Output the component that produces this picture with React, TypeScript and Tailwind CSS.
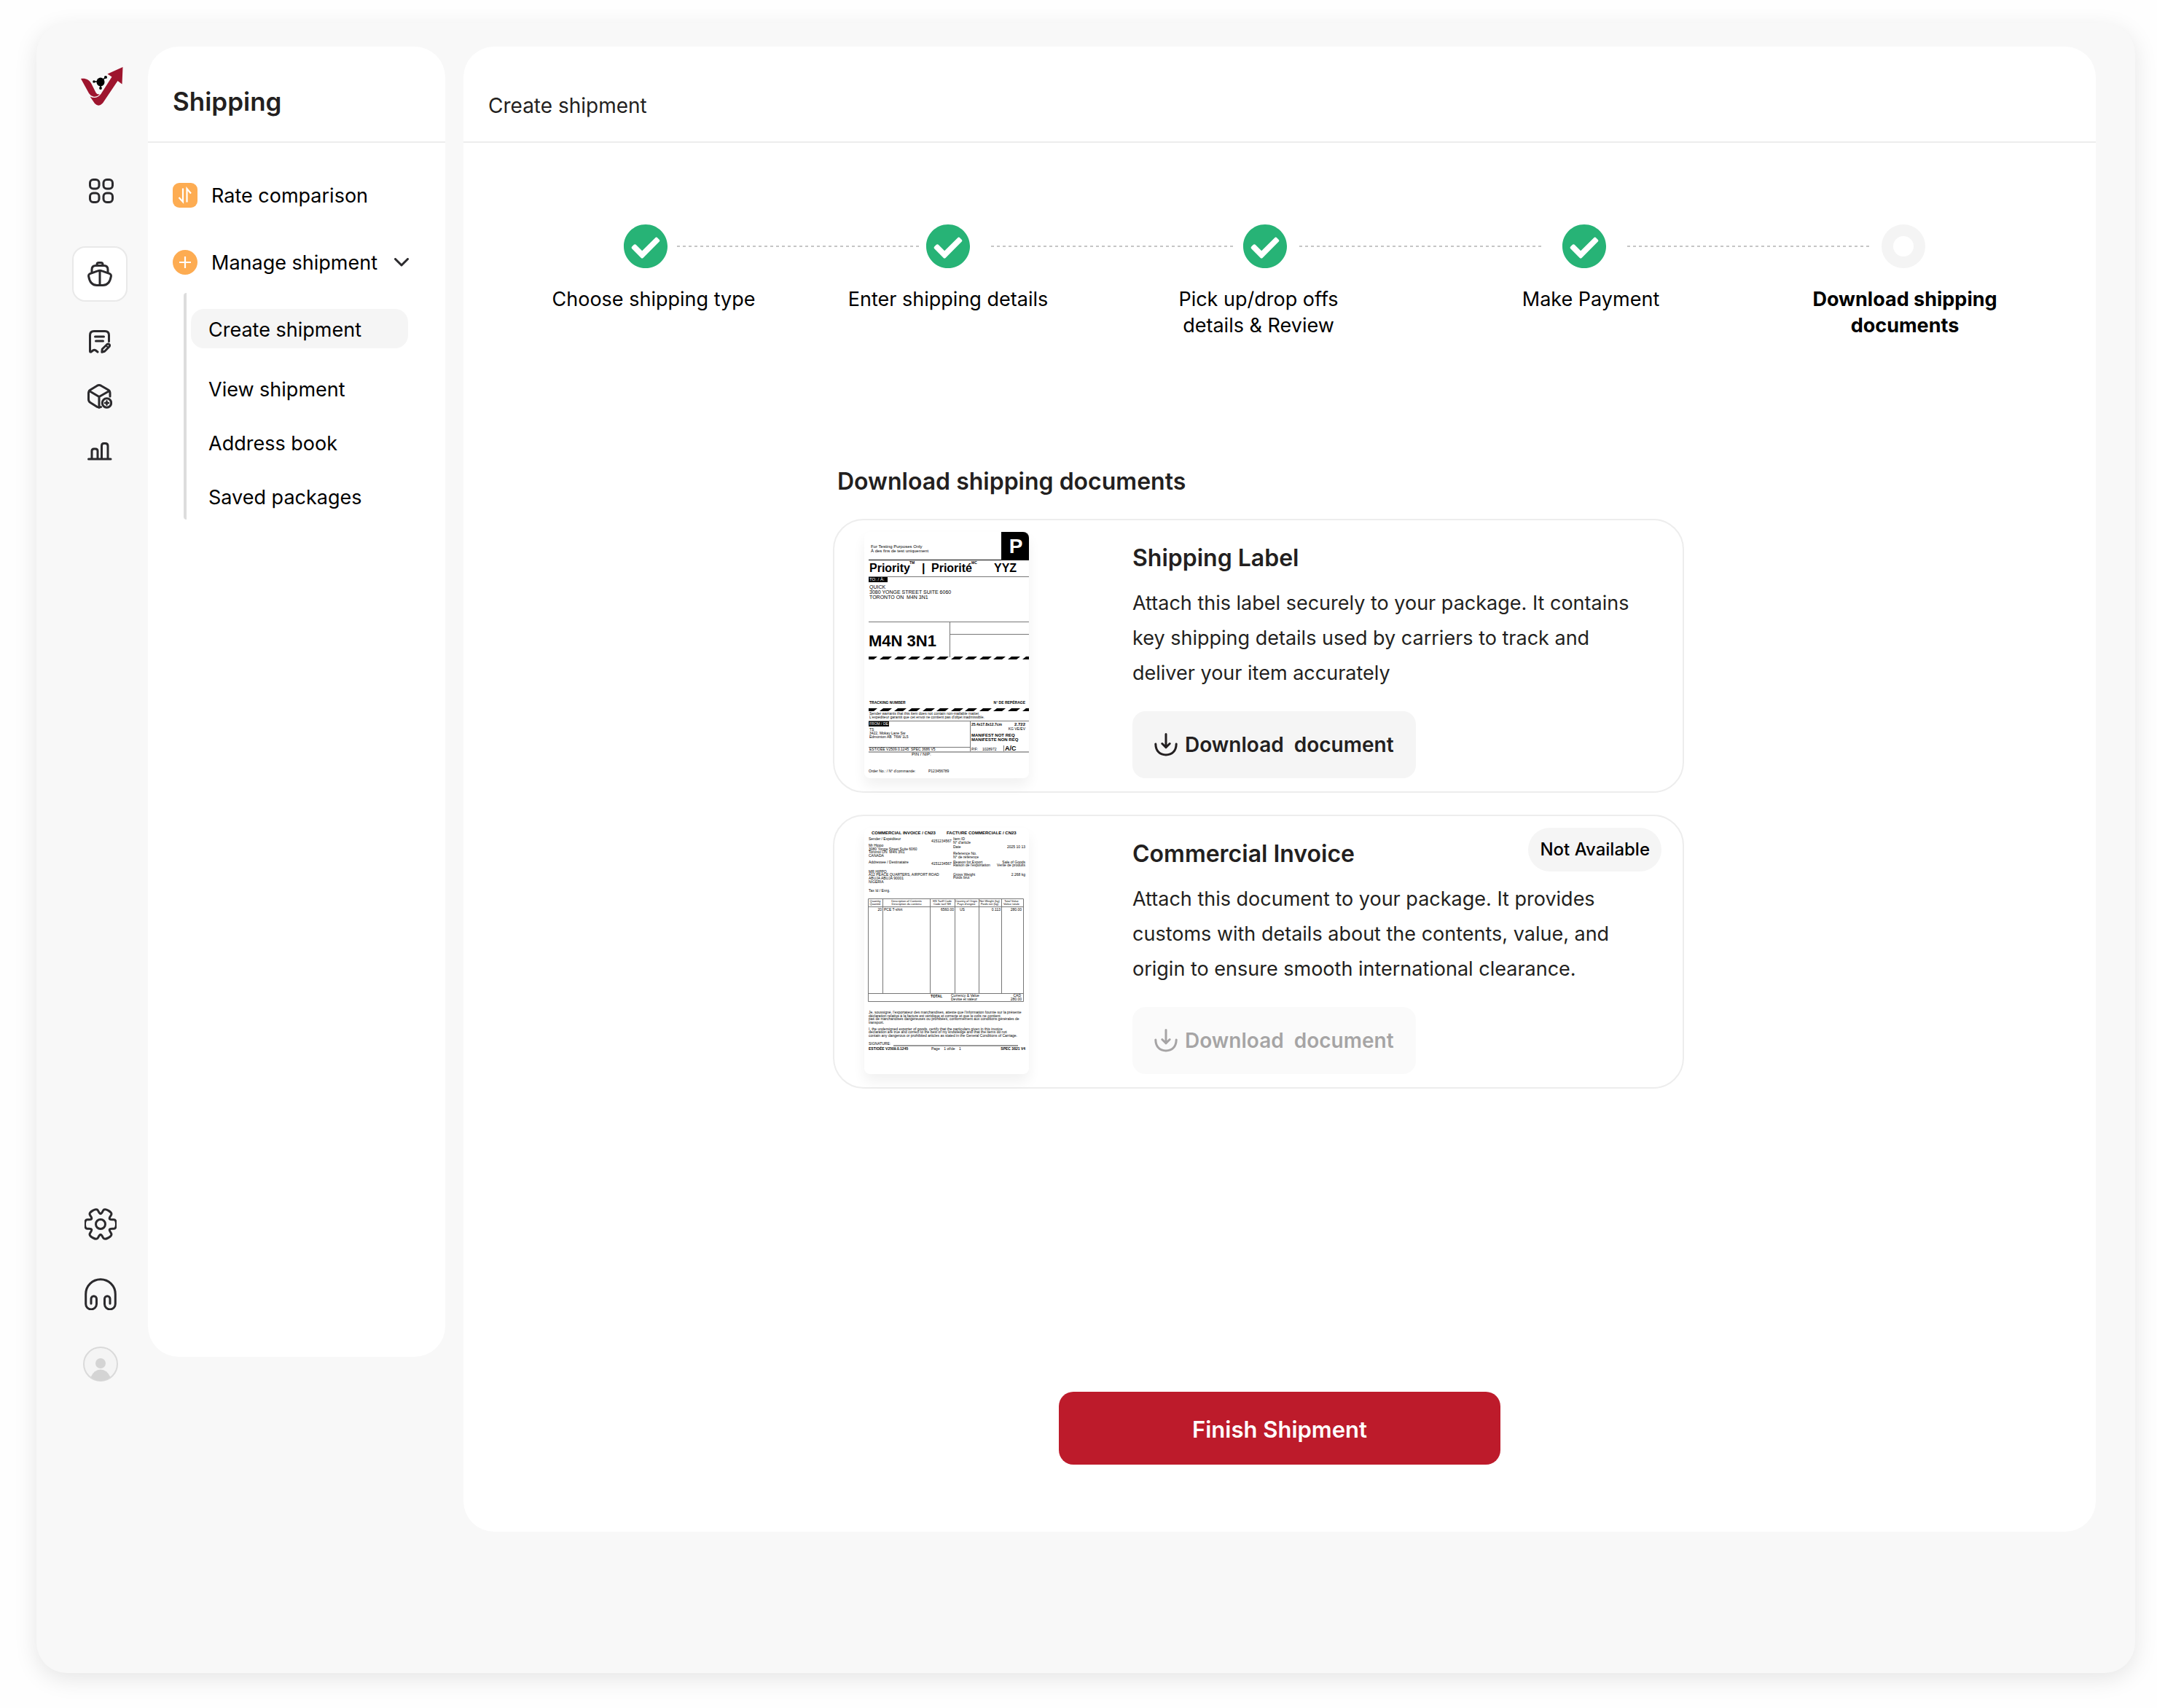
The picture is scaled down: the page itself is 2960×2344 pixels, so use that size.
import { Fragment, ReactNode } from "react";
import clsx from "clsx";
import { FaCheckCircle } from "react-icons/fa";

const steps = [
  { label: "Choose shipping type", done: true, line: "ml-3 mr-2" },
  { label: "Enter shipping details", done: true, line: "ml-7 mr-3" },
  { label: "Pick up/drop offs details & Review", done: true, line: "ml-4 mr-7" },
  { label: "Make Payment", done: true, line: "ml-7 mr-4" },
  { label: "Download shipping documents", done: false, line: "" },
];

const subLinks = ["Create shipment", "View shipment", "Address book", "Saved packages"];

const Logo = () => (
  <svg className="h-[53px] w-[58px]" viewBox="0 0 58 53">
    <path
      d="M0 16C6 15 11.500 17 14.500 23L20.500 35Q22 38 26 37.500Q22 41.500 17 40.500Q13 39.500 11 36Z"
      fill="#9e152e"
    />
    <path
      d="M57.500 0L56.500 23.500L50.500 19L30 49.500Q24.500 55.500 19 50L12.500 40.500Q21.500 45 27.500 37L42.500 13.500L36.500 9.500Z"
      fill="#9e152e"
    />
    <path d="M17.500 20H27L34 14M27 20V29" stroke="#000" strokeWidth="1.500" fill="none" />
    <ellipse cx="27" cy="20.500" rx="5.500" ry="6" />
    <circle cx="18" cy="20" r="1.800" />
    <circle cx="34" cy="14" r="2" />
    <circle cx="27" cy="29" r="1.900" />
  </svg>
);

const Icon = ({
  w,
  h,
  className,
  strokeWidth = 3,
  children,
}: {
  w: number;
  h: number;
  className: string;
  strokeWidth?: number;
  children: ReactNode;
}) => (
  <svg
    className={className}
    viewBox={`0 0 ${w} ${h}`}
    fill="none"
    stroke="currentColor"
    strokeWidth={strokeWidth}
    strokeLinecap="round"
    strokeLinejoin="round"
    aria-hidden="true"
  >
    {children}
  </svg>
);

const GridIcon = () => (
  <Icon w={34} h={34} className="h-[34px] w-[34px]">
    <rect x="1.500" y="1.500" width="12.500" height="12.500" rx="4.500" />
    <rect x="20" y="1.500" width="12.500" height="12.500" rx="4.500" />
    <rect x="1.500" y="20" width="12.500" height="12.500" rx="4.500" />
    <rect x="20" y="20" width="12.500" height="12.500" rx="4.500" />
  </Icon>
);

const ShipIcon = () => (
  <Icon w={34} h={34} className="h-[34px] w-[34px]">
    <path d="M13 5.500V4Q13 1.500 15.500 1.500H18.500Q21 1.500 21 4V5.500" />
    <path d="M6 15V11Q6 5.500 11.500 5.500H22.500Q28 5.500 28 11V15" />
    <path d="M17 12.300Q18.500 12.300 20 12.900L30.500 16.600Q32.800 17.600 32.400 20C31 29 27 32.500 21 32.500H13C7 32.500 3 29 1.600 20Q1.200 17.600 3.500 16.600L14 12.900Q15.500 12.300 17 12.300ZM17 12.500V32" />
  </Icon>
);

const InvoiceIcon = () => (
  <Icon w={30} h={32} className="h-8 w-[30px]">
    <path d="M27.500 15.500V7Q27.500 1.500 22 1.500H7Q1.500 1.500 1.500 7V29Q1.500 30.700 3.200 29.800L5.500 28Q7.500 26.500 9.500 28L12 30" />
    <path d="M8.500 9H20.500M9.500 15H19.500" />
    <path d="M17.800 30.200L18.300 26L25 19.500Q26.700 18.300 28 19.700Q29.200 21.200 27.900 22.700L21.500 29.300Z" />
    <path d="M23.800 21.500L26 23.600" strokeWidth="2" />
  </Icon>
);

const PackageIcon = () => (
  <Icon w={34} h={34} className="h-[34px] w-[34px]">
    <path d="M31 17V12.500Q31 9.500 28.500 8L18.500 2.200Q16 1 13.500 2.200L4 8Q1.500 9.500 1.500 12.500V21Q1.500 24 4 25.500L13.500 31.500Q16 32.800 18.500 31.500" />
    <path d="M2.500 9.500L16 17.500L30 9.500M16 17.500V32" />
    <circle cx="26.500" cy="26" r="6.200" />
    <path d="M26.500 23.400V28.600M23.900 26H29.100" strokeWidth="2.500" />
  </Icon>
);

const ChartIcon = () => (
  <Icon w={34} h={25} className="h-[25px] w-[34px]">
    <path d="M1.500 23H32M6 23V12Q6 9 9 9H11Q14 9 14 12V23M19.500 23V5Q19.500 1.500 22.500 1.500H24.500Q28 1.500 28 5V23" />
  </Icon>
);

// six-lobed cog, smoothed through the midpoints of a polar outline
const gearPath = () => {
  const pts: number[][] = [];
  for (let k = 0; k < 6; k++) {
    [
      [15.5, -23],
      [22.5, -17],
      [22.5, 17],
      [15.5, 23],
      [14, 30],
    ].forEach(([r, d]) => {
      const a = ((k * 60 + d) * Math.PI) / 180;
      pts.push([22 + r * Math.cos(a), 22 + r * Math.sin(a)]);
    });
  }
  const mid = (a: number[], b: number[]) => `${(a[0] + b[0]) / 2} ${(a[1] + b[1]) / 2}`;
  let d = `M${mid(pts[pts.length - 1], pts[0])}`;
  pts.forEach((p, i) => {
    d += `Q${p[0]} ${p[1]} ${mid(p, pts[(i + 1) % pts.length])}`;
  });
  return d + "Z";
};

const GearIcon = () => (
  <Icon w={44} h={44} className="h-11 w-11">
    <path d={gearPath()} />
    <circle cx="22" cy="22" r="6.500" />
  </Icon>
);

const HeadphonesIcon = () => (
  <Icon w={44} h={44} className="h-11 w-11">
    <path d="M9 35V28.500A3.700 3.700 0 0 1 16.500 28.500V35.500A7.400 7.400 0 0 1 1.700 35.500V22A20.300 20.300 0 0 1 42.300 22V35.500A7.400 7.400 0 0 1 27.500 35.500V28.500A3.700 3.700 0 0 1 35 28.500V35" />
  </Icon>
);

const AvatarIcon = () => (
  <svg className="h-12 w-12" viewBox="0 0 48 48" aria-hidden="true">
    <circle cx="24" cy="24" r="23" fill="#f4f4f4" stroke="#dadada" strokeWidth="2" />
    <circle cx="24" cy="23" r="7" fill="#d4d4d4" />
    <path d="M10.500 42Q15 31.500 24 31.500T37.500 42Q31.500 47 24 47T10.500 42Z" fill="#d4d4d4" />
  </svg>
);

const DownloadIcon = () => (
  <Icon w={32} h={32} className="h-8 w-8">
    <path d="M16 1.500V19M10.800 14.500L16 19.800L21.200 14.500" />
    <path d="M1.800 15C2 24.500 7.500 30 16 30S30 24.500 30.200 15" />
  </Icon>
);

const Rail = () => (
  <nav
    aria-label="Main"
    className="flex min-h-[calc(100vh-512px)] w-20 shrink-0 flex-col items-center self-start pt-7 text-[#2b2a2d]"
  >
    <a href="#home" aria-label="Home" className="pl-1">
      <Logo />
    </a>
    <a href="#dashboard" aria-label="Dashboard" className="mt-[97px] flex h-10 items-center pl-0.5">
      <GridIcon />
    </a>
    <div className="mt-14 flex flex-col items-center gap-[35px] pr-0.5">
      <a
        href="#shipping"
        aria-label="Shipping"
        className="flex h-[76px] w-[76px] items-center justify-center rounded-[18px] border-2 border-[#e9e9e9] bg-white"
      >
        <ShipIcon />
      </a>
      <a href="#invoices" aria-label="Invoices" className="flex h-10 items-center">
        <InvoiceIcon />
      </a>
      <a href="#packages" aria-label="Packages" className="flex h-10 items-center">
        <PackageIcon />
      </a>
      <a href="#reports" aria-label="Reports" className="flex h-10 items-center">
        <ChartIcon />
      </a>
    </div>
    <div className="mt-auto flex flex-col items-center gap-12">
      <a href="#settings" aria-label="Settings" className="flex h-12 items-center">
        <GearIcon />
      </a>
      <a href="#support" aria-label="Support" className="flex h-12 items-center">
        <HeadphonesIcon />
      </a>
      <a href="#profile" aria-label="Profile">
        <AvatarIcon />
      </a>
    </div>
  </nav>
);

const Sidebar = () => (
  <aside className="ml-[25px] min-h-[calc(100vh-546px)] w-[408px] shrink-0 self-start rounded-[42px] bg-white text-[27px] text-black">
    <div className="flex h-[132px] items-center border-b-2 border-[#ededed] px-[34px] pt-5">
      <h2 className="text-[35px] leading-[48px] font-semibold text-[#231f20]">Shipping</h2>
    </div>
    <div className="flex flex-col gap-11 px-[34px] pt-12">
      <a href="#rates" className="flex h-12 items-center gap-[19px]">
        <svg className="h-[34px] w-[34px]" viewBox="0 0 34 34" aria-hidden="true">
          <rect width="34" height="34" rx="9" fill="#fdac52" />
          <path
            d="M14 7.500V26L8.500 20M19.500 26.500V8L25 14.500"
            fill="none"
            stroke="#fff"
            strokeWidth="2.200"
          />
        </svg>
        <span className="pt-0.5">Rate comparison</span>
      </a>
      <button type="button" className="flex h-12 items-center gap-[19px]">
        <svg className="h-[34px] w-[34px]" viewBox="0 0 34 34" aria-hidden="true">
          <circle cx="17" cy="17" r="17" fill="#fdac52" />
          <path d="M17 9V25M9 17H25" stroke="#fff" strokeWidth="2.200" />
        </svg>
        <span className="pt-0.5">Manage shipment</span>
        <Icon w={20} h={12} className="ml-1 h-3 w-5 text-[#2b2a2d]">
          <path d="M1.500 1.500L10 10L18.500 1.500" />
        </Icon>
      </button>
    </div>
    <ul className="mt-[18px] mr-[51px] ml-[49px] flex flex-col gap-9 rounded-sm border-l-4 border-[#dddddd] pt-[22px] pb-[13px] pl-[6px]">
      {subLinks.map((e, index) => (
        <li key={e}>
          <a
            href="#shipment"
            className={clsx(
              "flex items-center pt-1 pl-6",
              index === 0 ? "h-[54px] rounded-[18px] bg-[#f5f5f5]" : "h-[38px]"
            )}
          >
            {e}
          </a>
        </li>
      ))}
    </ul>
  </aside>
);

const Stepper = () => (
  <div className="pt-[111px]">
    <div className="flex items-center pr-[234px] pl-[219px]" aria-hidden="true">
      {steps.map((step) =>
        step.done ? (
          <Fragment key={step.label}>
            <FaCheckCircle className="h-[62px] w-[62px] shrink-0 text-[#27b376]" />
            <svg className={clsx("h-[2px] w-0 flex-1", step.line)}>
              <line x1="0" y1="1" x2="100%" y2="1" stroke="#c6c6c6" strokeWidth="2" strokeDasharray="4 4" />
            </svg>
          </Fragment>
        ) : (
          <span
            key={step.label}
            className="h-[60px] w-[60px] shrink-0 rounded-full border-[16px] border-[#f4f4f4] bg-white"
          />
        )
      )}
    </div>
    <ol className="mt-6 grid grid-cols-[404fr_404fr_448fr_464fr_398fr] pr-[63px] pl-[59px] text-center text-[27px] leading-9 text-black">
      {steps.map((step) => (
        <li key={step.label} className="flex justify-center">
          <span className={clsx(step.done ? "max-w-[300px]" : "max-w-[280px] font-bold")}>{step.label}</span>
        </li>
      ))}
    </ol>
  </div>
);

type DocText = {
  x: number;
  y: number;
  t: string;
  s?: number;
  b?: boolean;
  end?: boolean;
  mid?: boolean;
  c?: string;
};

const DocTexts = ({ items }: { items: DocText[] }) => (
  <>
    {items.map((e, index) => (
      <text
        key={index}
        x={e.x}
        y={e.y}
        fontSize={e.s ?? 5}
        fontWeight={e.b ? 700 : 400}
        textAnchor={e.end ? "end" : e.mid ? "middle" : "start"}
        fill={e.c ?? "#000"}
        xmlSpace="preserve"
      >
        {e.t}
      </text>
    ))}
  </>
);

const Hatch = ({ y }: { y: number }) => (
  <>
    <path d={`M6 ${y}H18L13 ${y + 4}H6Z`} />
    {[21, 41, 60, 80, 99, 119, 138, 158, 177, 197].map((x) => (
      <path key={x} d={`M${x + 5} ${y}H${x + 17}L${x + 12} ${y + 4}H${x}Z`} />
    ))}
    <path d={`M222 ${y}H226V${y + 4}H217Z`} />
  </>
);

const labelTexts: DocText[] = [
  { x: 208, y: 29, t: "P", s: 28, b: true, mid: true, c: "#fff" },
  { x: 9, y: 22, t: "For Testing Purposes Only", s: 6 },
  { x: 9, y: 28, t: "À des fins de test uniquement", s: 6 },
  { x: 7, y: 55, t: "Priority", s: 16, b: true },
  { x: 62, y: 44, t: "TM", s: 5, b: true },
  { x: 79, y: 55, t: "|", s: 16, b: true },
  { x: 92, y: 55, t: "Priorité", s: 16, b: true },
  { x: 147, y: 44, t: "MC", s: 5, b: true },
  { x: 178, y: 55, t: "YYZ", s: 16, b: true },
  { x: 7, y: 67, t: "TO: / À:", s: 6, c: "#fff" },
  { x: 7, y: 78, t: "QUICK", s: 7 },
  { x: 7, y: 85, t: "3080 YONGE STREET SUITE 6060", s: 7 },
  { x: 7, y: 92, t: "TORONTO ON  M4N 3N1", s: 7 },
  { x: 6, y: 157, t: "M4N 3N1", s: 22, b: true },
  { x: 7, y: 236, t: "TRACKING NUMBER", b: true },
  { x: 221, y: 236, t: "N° DE REPÉRAGE", end: true, b: true },
  { x: 7, y: 251, t: "Sender warrants that this item does not contain non-mailable matter." },
  { x: 7, y: 256, t: "L'expéditeur garantit que cet envoi ne contient pas d'objet inadmissible." },
  { x: 7, y: 265, t: "FROM / DE:", c: "#fff" },
  { x: 7, y: 273, t: "TS" },
  { x: 7, y: 278, t: "3422, Mokay Lane Sw" },
  { x: 7, y: 283, t: "Edmonton AB  T6W 1L5" },
  { x: 147, y: 266, t: "25.4x17.8x12.7cm", b: true },
  { x: 221, y: 266, t: "2.722", s: 6, b: true, end: true },
  { x: 221, y: 272, t: "KG VE/EV", end: true },
  { x: 147, y: 281, t: "MANIFEST NOT REQ", s: 6, b: true },
  { x: 147, y: 287, t: "MANIFESTE NON REQ", s: 6, b: true },
  { x: 147, y: 300, t: "P/F:" },
  { x: 162, y: 300, t: "1028972" },
  { x: 193, y: 300, t: "A/C", s: 9, b: true },
  { x: 7, y: 300, t: "EST/OÉE V2509.0.1245  SPEC 3686 V5" },
  { x: 65, y: 307, t: "PIN / NIP:", s: 6 },
  { x: 6, y: 330, t: "Order No.: / N° d'commande:" },
  { x: 88, y: 330, t: "P123456789" },
];

const ShippingLabelPreview = () => (
  <svg
    className="h-[338px] w-[226px] shrink-0 rounded-lg bg-white font-['Liberation_Sans',sans-serif] shadow-[0_10px_18px_rgba(0,0,0,0.06)]"
    viewBox="0 0 226 338"
    role="img"
    aria-label="Shipping label preview"
  >
    <path d="M188 0H226V38H188Z" />
    <path d="M6 61H32V69H6Z" />
    <path d="M6 260H34V267H6Z" />
    <path d="M6 38.500H226" stroke="#000" />
    <path
      d="M6 61.500H226M6 123.500H226M117.500 123.500V172M117.500 140.500H226M6 259.500H226M145.500 259.500V301M6 295.500H145.500M191.500 293V301"
      fill="none"
      stroke="#777"
    />
    <path d="M6 302H226" stroke="#555" />
    <Hatch y={171} />
    <Hatch y={242} />
    <DocTexts items={labelTexts} />
  </svg>
);

const invoiceTexts: DocText[] = [
  { x: 10, y: 9, t: "COMMERCIAL INVOICE / CN23", s: 6, b: true },
  { x: 113, y: 9, t: "FACTURE COMMERCIALE / CN23", s: 6, b: true },
  { x: 6, y: 17, t: "Sender / Expéditeur" },
  { x: 92, y: 20, t: "4151234567" },
  { x: 122, y: 17, t: "Item ID" },
  { x: 122, y: 22, t: "N° d'article" },
  { x: 6, y: 26, t: "Mr Hippo" },
  { x: 6, y: 31, t: "3080 Yonge Street Suite 6060" },
  { x: 6, y: 35, t: "Toronto ON  M4N 3N1" },
  { x: 6, y: 40, t: "CANADA" },
  { x: 122, y: 28, t: "Date" },
  { x: 221, y: 28, t: "2025 10 13", end: true },
  { x: 122, y: 37, t: "Reference No." },
  { x: 122, y: 42, t: "N° de référence" },
  { x: 6, y: 49, t: "Addressee / Destinataire" },
  { x: 92, y: 51, t: "4151234567" },
  { x: 122, y: 49, t: "Reason for Export" },
  { x: 122, y: 53, t: "Raison de l'exportation" },
  { x: 221, y: 49, t: "Sale of Goods", end: true },
  { x: 221, y: 53, t: "Vente de produits", end: true },
  { x: 6, y: 62, t: "MR HIPPO" },
  { x: 6, y: 66, t: "A12 PEACE QUARTERS, AIRPORT ROAD" },
  { x: 6, y: 71, t: "ABUJA ABUJA 90001" },
  { x: 6, y: 76, t: "NIGERIA" },
  { x: 122, y: 66, t: "Gross Weight" },
  { x: 122, y: 70, t: "Poids brut" },
  { x: 221, y: 66, t: "2.268 kg", end: true },
  { x: 6, y: 88, t: "Tax Id / Enrg." },
  { x: 15, y: 102, t: "Quantity", s: 4, mid: true },
  { x: 15, y: 106, t: "Quantité", s: 4, mid: true },
  { x: 58, y: 102, t: "Description of Contents", s: 4, mid: true },
  { x: 58, y: 106, t: "Description du contenu", s: 4, mid: true },
  { x: 107, y: 102, t: "HS Tariff Code", s: 4, mid: true },
  { x: 107, y: 106, t: "Code tarif SH", s: 4, mid: true },
  { x: 140, y: 102, t: "Country of Origin", s: 4, mid: true },
  { x: 140, y: 106, t: "Pays d'origine", s: 4, mid: true },
  { x: 172, y: 102, t: "Net Weight (kg)", s: 4, mid: true },
  { x: 172, y: 106, t: "Poids net (kg)", s: 4, mid: true },
  { x: 202, y: 102, t: "Total Value", s: 4, mid: true },
  { x: 202, y: 106, t: "Valeur totale", s: 4, mid: true },
  { x: 24, y: 114, t: "20", end: true },
  { x: 27, y: 114, t: "PCE T-shirt" },
  { x: 123, y: 114, t: "6560.00", end: true },
  { x: 131, y: 114, t: "US" },
  { x: 187, y: 114, t: "0.113", end: true },
  { x: 216, y: 114, t: "280.00", end: true },
  { x: 91, y: 233, t: "TOTAL", b: true },
  { x: 119, y: 232, t: "Currency & Value" },
  { x: 119, y: 237, t: "Devise et valeur" },
  { x: 215, y: 232, t: "CAD", end: true },
  { x: 216, y: 237, t: "280.00", end: true },
  { x: 6, y: 255, t: "Je, soussigné, l'exportateur des marchandises, atteste que l'information fournie sur la présente" },
  { x: 6, y: 260, t: "déclaration relative à la facture est véridique et correcte et que le colis ne contient" },
  { x: 6, y: 264, t: "pas de marchandises dangereuses ou prohibées, conformément aux conditions générales de" },
  { x: 6, y: 269, t: "transport." },
  { x: 6, y: 278, t: "I, the undersigned exporter of goods, certify that the particulars given in this invoice" },
  { x: 6, y: 282, t: "declaration are true and correct to the best of my knowledge and that the items do not" },
  { x: 6, y: 287, t: "contain any dangerous or prohibited articles as stated in the General Conditions of Carriage." },
  { x: 6, y: 298, t: "SIGNATURE:" },
  { x: 6, y: 305, t: "EST/OÉE V2509.0.1245", b: true },
  { x: 92, y: 305, t: "Page    1 of/de    1" },
  { x: 221, y: 305, t: "SPEC 3821 V4", b: true, end: true },
];

const InvoicePreview = () => (
  <svg
    className="h-[338px] w-[226px] shrink-0 rounded-lg bg-white font-['Liberation_Sans',sans-serif] shadow-[0_10px_18px_rgba(0,0,0,0.06)]"
    viewBox="0 0 226 338"
    role="img"
    aria-label="Commercial invoice preview"
  >
    <path
      d="M5.500 97.500H218.500V238.500H5.500ZM5.500 108.500H218.500M5.500 227.500H218.500M25.500 97.500V227M90.500 97.500V227M124.500 97.500V227M157.500 97.500V227M188.500 97.500V227"
      fill="none"
      stroke="#777"
    />
    <path d="M40 299H211" stroke="#333" strokeWidth="1" />
    <DocTexts items={invoiceTexts} />
  </svg>
);

const DocumentCard = ({
  title,
  text,
  preview,
  available = true,
}: {
  title: string;
  text: string;
  preview: ReactNode;
  available?: boolean;
}) => (
  <article className="relative flex rounded-[42px] border-2 border-[#ededed] bg-white pt-4 pr-10 pb-[18px] pl-[41px]">
    {preview}
    <div className="ml-[142px] flex flex-1 flex-col items-start pt-3 text-[#231f20]">
      <h3 className="text-[32px] leading-[48px] font-semibold">{title}</h3>
      <p className="mt-[14px] max-w-[704px] text-[27px] leading-[48px]">{text}</p>
      <button
        type="button"
        disabled={!available}
        className="mt-7 flex h-[92px] items-center gap-[10px] rounded-[18px] bg-[#f5f5f5] px-[30px] text-[28px] font-semibold whitespace-pre disabled:opacity-40"
      >
        <DownloadIcon />
        {"Download  document"}
      </button>
    </div>
    {!available && (
      <span className="absolute top-4 right-[29px] flex h-[60px] items-center rounded-full bg-[#f5f5f5] px-4 text-[24px] font-medium text-black">
        Not Available
      </span>
    )}
  </article>
);

const App = () => {
  return (
    <div className="flex min-h-screen bg-[#fefefe] pt-8 pr-[30px] pb-12 pl-[50px] font-['Inter',sans-serif]">
      <div className="flex flex-1 items-start rounded-[42px] bg-[#f8f8f8] pt-8 pr-[54px] pb-12 pl-12 shadow-[0_8px_32px_rgba(0,0,0,0.1)]">
        <Rail />
        <Sidebar />
        <main className="ml-[25px] min-w-0 flex-1 rounded-[42px] bg-white pb-[92px]">
          <header className="flex h-[132px] items-center border-b-2 border-[#ededed] px-[34px] pt-8">
            <h1 className="text-[28px] leading-9 text-[#231f20]">Create shipment</h1>
          </header>
          <Stepper />
          <section className="mx-auto mt-[172px] w-[1226px] max-w-full pr-[58px]">
            <h2 className="px-[6px] text-[32px] leading-[48px] font-semibold text-[#231f20]">
              Download shipping documents
            </h2>
            <div className="mt-[27px] flex flex-col gap-[30px]">
              <DocumentCard
                title="Shipping Label"
                text="Attach this label securely to your package. It contains key shipping details used by carriers to track and deliver your item accurately"
                preview={<ShippingLabelPreview />}
              />
              <DocumentCard
                title="Commercial Invoice"
                text="Attach this document to your package. It provides customs with details about the contents, value, and origin to ensure smooth international clearance."
                preview={<InvoicePreview />}
                available={false}
              />
            </div>
          </section>
          <button
            type="button"
            className="mx-auto mt-[416px] block h-[100px] w-[606px] max-w-full rounded-[20px] bg-[#bd1b2b] pt-1 text-[31px] font-semibold text-white"
          >
            Finish Shipment
          </button>
        </main>
      </div>
    </div>
  );
};
export default App;
